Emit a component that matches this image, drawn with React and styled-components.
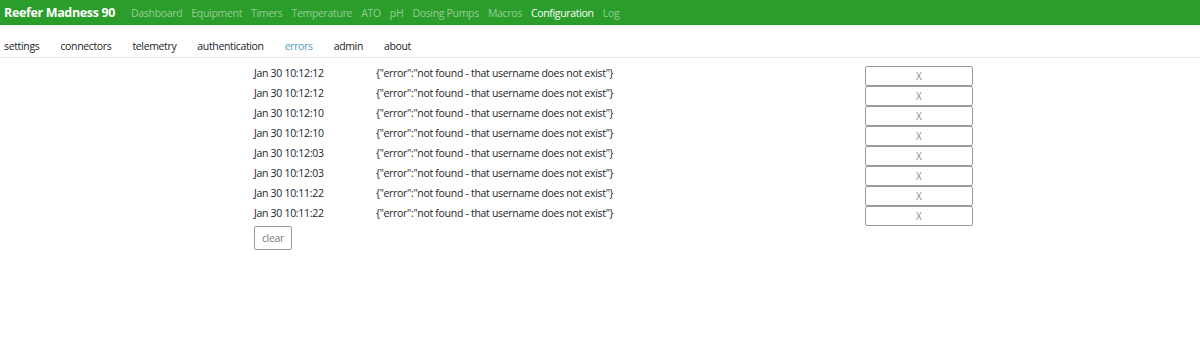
import React from 'react';
import styled, { createGlobalStyle } from 'styled-components';

const GlobalStyle = createGlobalStyle`
  body {
    margin: 0;
    background: #fff;
    font-family: "Open Sans", "Noto Sans", sans-serif;
    color: #212529;
  }
`;

const Navbar = styled.nav`
  height: 25px;
  display: flex;
  align-items: center;
  background-color: #2a9d2a;
  padding: 0 4px;
`;

const Brand = styled.span`
  font-size: 12.5px;
  font-weight: 700;
  color: #fff;
  margin-right: 16px;
  letter-spacing: -0.35px;
`;

const NavLink = styled.a`
  font-size: 10.5px;
  color: ${props => (props.active ? '#fff' : 'rgba(255, 255, 255, 0.5)')};
  margin-right: 9px;
  letter-spacing: -0.32px;
`;

const Tabs = styled.ul`
  display: flex;
  list-style: none;
  margin: 0;
  padding: 10px 0 0 4px;
  height: 33px;
  box-sizing: border-box;
  border-bottom: 1px solid #e6e6e6;
  align-items: center;
`;

const Tab = styled.li`
  font-size: 10.5px;
  color: ${props => (props.active ? '#4f9bbd' : '#212529')};
  margin-right: 21px;
  letter-spacing: -0.35px;
`;

const List = styled.div`
  margin: 8px 0 0 254px;
  width: 720px;
`;

const Row = styled.div`
  display: grid;
  grid-template-columns: 122px 489px 108px;
  align-items: start;
  height: 20px;
  font-size: 10.5px;
  letter-spacing: -0.3px;
`;

const Cell = styled.span`
  line-height: 15px;
`;

const DeleteButton = styled.button`
  height: 20px;
  width: 108px;
  box-sizing: border-box;
  background: #fff;
  border: 1px solid #9a9a9a;
  border-radius: 2px;
  color: #8a8a8a;
  font-family: inherit;
  font-size: 10px;
  padding: 0;
  cursor: pointer;
`;

const ClearButton = styled.button`
  display: block;
  margin-top: 0;
  width: 38px;
  height: 24px;
  box-sizing: border-box;
  background: #fff;
  border: 1px solid #9a9a9a;
  border-radius: 2px;
  color: #7a7a7a;
  font-family: inherit;
  font-size: 10.5px;
  letter-spacing: -0.3px;
  padding: 0;
  cursor: pointer;
`;

const navItems = [
  'Dashboard',
  'Equipment',
  'Timers',
  'Temperature',
  'ATO',
  'pH',
  'Dosing Pumps',
  'Macros',
  'Configuration',
  'Log',
];

const tabs = ['settings', 'connectors', 'telemetry', 'authentication', 'errors', 'admin', 'about'];

const times = [
  'Jan 30 10:12:12',
  'Jan 30 10:12:12',
  'Jan 30 10:12:10',
  'Jan 30 10:12:10',
  'Jan 30 10:12:03',
  'Jan 30 10:12:03',
  'Jan 30 10:11:22',
  'Jan 30 10:11:22',
];

const message = '{"error":"not found - that username does not exist"}';

const App = () => (
  <>
    <GlobalStyle />
    <Navbar>
      <Brand>Reefer Madness 90</Brand>
      {navItems.map(item => (
        <NavLink key={item} active={item === 'Configuration'}>
          {item}
        </NavLink>
      ))}
    </Navbar>
    <Tabs>
      {tabs.map(tab => (
        <Tab key={tab} active={tab === 'errors'}>
          {tab}
        </Tab>
      ))}
    </Tabs>
    <List>
      {times.map((time, i) => (
        <Row key={i}>
          <Cell>{time}</Cell>
          <Cell>{message}</Cell>
          <DeleteButton>X</DeleteButton>
        </Row>
      ))}
      <ClearButton>clear</ClearButton>
    </List>
  </>
);

export default App;
